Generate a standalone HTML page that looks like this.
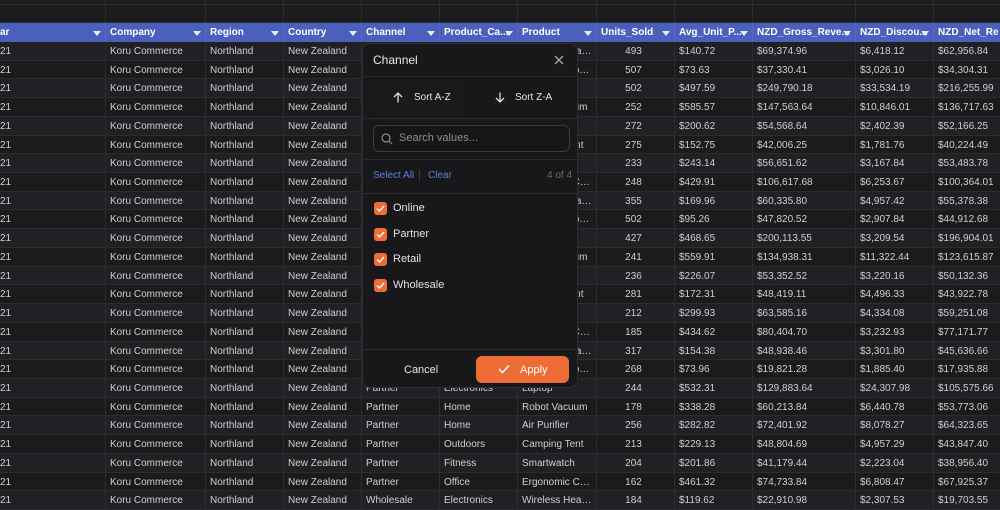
<!DOCTYPE html>
<html><head><meta charset="utf-8"><style>
*{box-sizing:border-box;margin:0;padding:0}
body{width:1000px;height:500px;overflow:hidden;background:#1c1c1e;font-family:"Liberation Sans",sans-serif;font-size:10px;color:#cfcfd2;position:relative}
.g{position:absolute;left:0;top:0;width:1000px}
.r{display:flex;height:18.72px;border-bottom:1px solid #2d2d31}
.r:nth-child(odd){background:#212125}
.r:nth-child(even){background:#1b1b1c}
.r>div{border-right:1px solid #2d2d31;padding-left:4px;padding-right:4px;line-height:19px;white-space:nowrap;overflow:hidden;text-overflow:ellipsis;flex:none}
.r>div.n{text-align:center;padding-left:0}
.w0{width:106px}.w1{width:100px}.w2{width:78px}.w3{width:78px}.w4{width:78px}.w5{width:78px}.w6{width:79px}.w7{width:78px}.w8{width:78px}.w9{width:103px}.w10{width:78px}.w11{width:80px}
.top{position:absolute;left:0;width:1000px;height:18px;background:#1c1c1e;border-bottom:1px solid #2d2d31;display:flex}
.top div{border-right:1px solid #2d2d31;flex:none;height:100%}
.h{position:absolute;left:0;top:23px;width:1000px;height:19px;background:#4b5fbd;display:flex;color:#fff;font-weight:bold;font-size:10px}
.h div{flex:none;padding-left:4px;line-height:19px;position:relative;white-space:nowrap;overflow:hidden;border-right:1px solid #5668c4}
.h div:after{content:"";position:absolute;right:4px;top:8px;border-left:4px solid transparent;border-right:4px solid transparent;border-top:5px solid #e8ebf7}
.pop{position:absolute;left:362px;top:43px;width:216px;height:345px;background:#18181a;border:1px solid #2e2e32;border-radius:8px;color:#e6e6e8}
.hr{position:absolute;left:0;right:0;height:1px;background:#2c2c30}
.cb{position:absolute;left:11px;width:13px;height:13px;border-radius:3px;background:#ee6c35}
.cb svg{position:absolute;left:2px;top:2px}
.lbl{position:absolute;left:30px;font-size:11px;color:#e2e2e4}
</style></head><body>
<div class="top" style="top:-13px"><div class="w0"></div><div class="w1"></div><div class="w2"></div><div class="w3"></div><div class="w4"></div><div class="w5"></div><div class="w6"></div><div class="w7"></div><div class="w8"></div><div class="w9"></div><div class="w10"></div><div class="w11"></div></div>
<div class="top" style="top:5px"><div class="w0"></div><div class="w1"></div><div class="w2"></div><div class="w3"></div><div class="w4"></div><div class="w5"></div><div class="w6"></div><div class="w7"></div><div class="w8"></div><div class="w9"></div><div class="w10"></div><div class="w11"></div></div>
<div class="h"><div class="w0" style="padding-left:0">ar</div><div class="w1">Company</div><div class="w2">Region</div><div class="w3">Country</div><div class="w4">Channel</div><div class="w5">Product_Ca...</div><div class="w6">Product</div><div class="w7">Units_Sold</div><div class="w8">Avg_Unit_P...</div><div class="w9">NZD_Gross_Reve...</div><div class="w10">NZD_Discou...</div><div class="w11">NZD_Net_Re</div></div>
<div class="g" style="top:42px">
<div class="r"><div class="w0" style="padding-left:0">21</div><div class="w1">Koru Commerce</div><div class="w2">Northland</div><div class="w3">New Zealand</div><div class="w4">Online</div><div class="w5">Electronics</div><div class="w6">Wireless Headphones</div><div class="w7 n">493</div><div class="w8">$140.72</div><div class="w9">$69,374.96</div><div class="w10">$6,418.12</div><div class="w11">$62,956.84</div></div>
<div class="r"><div class="w0" style="padding-left:0">21</div><div class="w1">Koru Commerce</div><div class="w2">Northland</div><div class="w3">New Zealand</div><div class="w4">Online</div><div class="w5">Electronics</div><div class="w6">Bluetooth Speaker</div><div class="w7 n">507</div><div class="w8">$73.63</div><div class="w9">$37,330.41</div><div class="w10">$3,026.10</div><div class="w11">$34,304.31</div></div>
<div class="r"><div class="w0" style="padding-left:0">21</div><div class="w1">Koru Commerce</div><div class="w2">Northland</div><div class="w3">New Zealand</div><div class="w4">Online</div><div class="w5">Electronics</div><div class="w6">Laptop</div><div class="w7 n">502</div><div class="w8">$497.59</div><div class="w9">$249,790.18</div><div class="w10">$33,534.19</div><div class="w11">$216,255.99</div></div>
<div class="r"><div class="w0" style="padding-left:0">21</div><div class="w1">Koru Commerce</div><div class="w2">Northland</div><div class="w3">New Zealand</div><div class="w4">Online</div><div class="w5">Home</div><div class="w6">Robot Vacuum</div><div class="w7 n">252</div><div class="w8">$585.57</div><div class="w9">$147,563.64</div><div class="w10">$10,846.01</div><div class="w11">$136,717.63</div></div>
<div class="r"><div class="w0" style="padding-left:0">21</div><div class="w1">Koru Commerce</div><div class="w2">Northland</div><div class="w3">New Zealand</div><div class="w4">Online</div><div class="w5">Home</div><div class="w6">Air Purifier</div><div class="w7 n">272</div><div class="w8">$200.62</div><div class="w9">$54,568.64</div><div class="w10">$2,402.39</div><div class="w11">$52,166.25</div></div>
<div class="r"><div class="w0" style="padding-left:0">21</div><div class="w1">Koru Commerce</div><div class="w2">Northland</div><div class="w3">New Zealand</div><div class="w4">Online</div><div class="w5">Outdoors</div><div class="w6">Camping Tent</div><div class="w7 n">275</div><div class="w8">$152.75</div><div class="w9">$42,006.25</div><div class="w10">$1,781.76</div><div class="w11">$40,224.49</div></div>
<div class="r"><div class="w0" style="padding-left:0">21</div><div class="w1">Koru Commerce</div><div class="w2">Northland</div><div class="w3">New Zealand</div><div class="w4">Online</div><div class="w5">Fitness</div><div class="w6">Smartwatch</div><div class="w7 n">233</div><div class="w8">$243.14</div><div class="w9">$56,651.62</div><div class="w10">$3,167.84</div><div class="w11">$53,483.78</div></div>
<div class="r"><div class="w0" style="padding-left:0">21</div><div class="w1">Koru Commerce</div><div class="w2">Northland</div><div class="w3">New Zealand</div><div class="w4">Online</div><div class="w5">Office</div><div class="w6">Ergonomic Chair Pro</div><div class="w7 n">248</div><div class="w8">$429.91</div><div class="w9">$106,617.68</div><div class="w10">$6,253.67</div><div class="w11">$100,364.01</div></div>
<div class="r"><div class="w0" style="padding-left:0">21</div><div class="w1">Koru Commerce</div><div class="w2">Northland</div><div class="w3">New Zealand</div><div class="w4">Retail</div><div class="w5">Electronics</div><div class="w6">Wireless Headphones</div><div class="w7 n">355</div><div class="w8">$169.96</div><div class="w9">$60,335.80</div><div class="w10">$4,957.42</div><div class="w11">$55,378.38</div></div>
<div class="r"><div class="w0" style="padding-left:0">21</div><div class="w1">Koru Commerce</div><div class="w2">Northland</div><div class="w3">New Zealand</div><div class="w4">Retail</div><div class="w5">Electronics</div><div class="w6">Bluetooth Speaker</div><div class="w7 n">502</div><div class="w8">$95.26</div><div class="w9">$47,820.52</div><div class="w10">$2,907.84</div><div class="w11">$44,912.68</div></div>
<div class="r"><div class="w0" style="padding-left:0">21</div><div class="w1">Koru Commerce</div><div class="w2">Northland</div><div class="w3">New Zealand</div><div class="w4">Retail</div><div class="w5">Electronics</div><div class="w6">Laptop</div><div class="w7 n">427</div><div class="w8">$468.65</div><div class="w9">$200,113.55</div><div class="w10">$3,209.54</div><div class="w11">$196,904.01</div></div>
<div class="r"><div class="w0" style="padding-left:0">21</div><div class="w1">Koru Commerce</div><div class="w2">Northland</div><div class="w3">New Zealand</div><div class="w4">Retail</div><div class="w5">Home</div><div class="w6">Robot Vacuum</div><div class="w7 n">241</div><div class="w8">$559.91</div><div class="w9">$134,938.31</div><div class="w10">$11,322.44</div><div class="w11">$123,615.87</div></div>
<div class="r"><div class="w0" style="padding-left:0">21</div><div class="w1">Koru Commerce</div><div class="w2">Northland</div><div class="w3">New Zealand</div><div class="w4">Retail</div><div class="w5">Home</div><div class="w6">Air Purifier</div><div class="w7 n">236</div><div class="w8">$226.07</div><div class="w9">$53,352.52</div><div class="w10">$3,220.16</div><div class="w11">$50,132.36</div></div>
<div class="r"><div class="w0" style="padding-left:0">21</div><div class="w1">Koru Commerce</div><div class="w2">Northland</div><div class="w3">New Zealand</div><div class="w4">Retail</div><div class="w5">Outdoors</div><div class="w6">Camping Tent</div><div class="w7 n">281</div><div class="w8">$172.31</div><div class="w9">$48,419.11</div><div class="w10">$4,496.33</div><div class="w11">$43,922.78</div></div>
<div class="r"><div class="w0" style="padding-left:0">21</div><div class="w1">Koru Commerce</div><div class="w2">Northland</div><div class="w3">New Zealand</div><div class="w4">Retail</div><div class="w5">Fitness</div><div class="w6">Smartwatch</div><div class="w7 n">212</div><div class="w8">$299.93</div><div class="w9">$63,585.16</div><div class="w10">$4,334.08</div><div class="w11">$59,251.08</div></div>
<div class="r"><div class="w0" style="padding-left:0">21</div><div class="w1">Koru Commerce</div><div class="w2">Northland</div><div class="w3">New Zealand</div><div class="w4">Retail</div><div class="w5">Office</div><div class="w6">Ergonomic Chair Pro</div><div class="w7 n">185</div><div class="w8">$434.62</div><div class="w9">$80,404.70</div><div class="w10">$3,232.93</div><div class="w11">$77,171.77</div></div>
<div class="r"><div class="w0" style="padding-left:0">21</div><div class="w1">Koru Commerce</div><div class="w2">Northland</div><div class="w3">New Zealand</div><div class="w4">Partner</div><div class="w5">Electronics</div><div class="w6">Wireless Headphones</div><div class="w7 n">317</div><div class="w8">$154.38</div><div class="w9">$48,938.46</div><div class="w10">$3,301.80</div><div class="w11">$45,636.66</div></div>
<div class="r"><div class="w0" style="padding-left:0">21</div><div class="w1">Koru Commerce</div><div class="w2">Northland</div><div class="w3">New Zealand</div><div class="w4">Partner</div><div class="w5">Electronics</div><div class="w6">Bluetooth Speaker</div><div class="w7 n">268</div><div class="w8">$73.96</div><div class="w9">$19,821.28</div><div class="w10">$1,885.40</div><div class="w11">$17,935.88</div></div>
<div class="r"><div class="w0" style="padding-left:0">21</div><div class="w1">Koru Commerce</div><div class="w2">Northland</div><div class="w3">New Zealand</div><div class="w4">Partner</div><div class="w5">Electronics</div><div class="w6">Laptop</div><div class="w7 n">244</div><div class="w8">$532.31</div><div class="w9">$129,883.64</div><div class="w10">$24,307.98</div><div class="w11">$105,575.66</div></div>
<div class="r"><div class="w0" style="padding-left:0">21</div><div class="w1">Koru Commerce</div><div class="w2">Northland</div><div class="w3">New Zealand</div><div class="w4">Partner</div><div class="w5">Home</div><div class="w6">Robot Vacuum</div><div class="w7 n">178</div><div class="w8">$338.28</div><div class="w9">$60,213.84</div><div class="w10">$6,440.78</div><div class="w11">$53,773.06</div></div>
<div class="r"><div class="w0" style="padding-left:0">21</div><div class="w1">Koru Commerce</div><div class="w2">Northland</div><div class="w3">New Zealand</div><div class="w4">Partner</div><div class="w5">Home</div><div class="w6">Air Purifier</div><div class="w7 n">256</div><div class="w8">$282.82</div><div class="w9">$72,401.92</div><div class="w10">$8,078.27</div><div class="w11">$64,323.65</div></div>
<div class="r"><div class="w0" style="padding-left:0">21</div><div class="w1">Koru Commerce</div><div class="w2">Northland</div><div class="w3">New Zealand</div><div class="w4">Partner</div><div class="w5">Outdoors</div><div class="w6">Camping Tent</div><div class="w7 n">213</div><div class="w8">$229.13</div><div class="w9">$48,804.69</div><div class="w10">$4,957.29</div><div class="w11">$43,847.40</div></div>
<div class="r"><div class="w0" style="padding-left:0">21</div><div class="w1">Koru Commerce</div><div class="w2">Northland</div><div class="w3">New Zealand</div><div class="w4">Partner</div><div class="w5">Fitness</div><div class="w6">Smartwatch</div><div class="w7 n">204</div><div class="w8">$201.86</div><div class="w9">$41,179.44</div><div class="w10">$2,223.04</div><div class="w11">$38,956.40</div></div>
<div class="r"><div class="w0" style="padding-left:0">21</div><div class="w1">Koru Commerce</div><div class="w2">Northland</div><div class="w3">New Zealand</div><div class="w4">Partner</div><div class="w5">Office</div><div class="w6">Ergonomic Chair Pro</div><div class="w7 n">162</div><div class="w8">$461.32</div><div class="w9">$74,733.84</div><div class="w10">$6,808.47</div><div class="w11">$67,925.37</div></div>
<div class="r"><div class="w0" style="padding-left:0">21</div><div class="w1">Koru Commerce</div><div class="w2">Northland</div><div class="w3">New Zealand</div><div class="w4">Wholesale</div><div class="w5">Electronics</div><div class="w6">Wireless Headphones</div><div class="w7 n">184</div><div class="w8">$119.62</div><div class="w9">$22,910.98</div><div class="w10">$2,307.53</div><div class="w11">$19,703.55</div></div>
</div>

<div class="pop">
<div style="position:absolute;left:10px;top:9px;font-size:12px;color:#e8e8ea">Channel</div>
<svg style="position:absolute;left:191px;top:11px" width="10" height="10" viewBox="0 0 10 10"><path d="M1 1L9 9M9 1L1 9" stroke="#a8a8ac" stroke-width="1.3"/></svg>
<div class="hr" style="top:32px"></div>
<div style="position:absolute;left:10px;top:36px;width:92px;height:34px;border-radius:6px;background:#1a1a1c"></div>
<svg style="position:absolute;left:30px;top:48px" width="10" height="11" viewBox="0 0 10 11"><path d="M5 10.5V1M1 5L5 1L9 5" stroke="#e0e0e2" stroke-width="1.3" fill="none"/></svg>
<div style="position:absolute;left:51px;top:48px;font-size:10px;color:#e6e6e8">Sort A-Z</div>
<svg style="position:absolute;left:132px;top:48px" width="10" height="11" viewBox="0 0 10 11"><path d="M5 0.5V10M1 6L5 10L9 6" stroke="#e0e0e2" stroke-width="1.3" fill="none"/></svg>
<div style="position:absolute;left:152px;top:48px;font-size:10px;color:#e6e6e8">Sort Z-A</div>
<div class="hr" style="top:74px"></div>
<div style="position:absolute;left:10px;top:81px;width:197px;height:27px;border:1px solid #3a3a3f;border-radius:6px;background:#161618"></div>
<svg style="position:absolute;left:18px;top:89px" width="12" height="12" viewBox="0 0 12 12"><circle cx="5" cy="5" r="4" stroke="#8c8c90" stroke-width="1.2" fill="none"/><path d="M8 8L11 11" stroke="#8c8c90" stroke-width="1.2"/></svg>
<div style="position:absolute;left:36px;top:88px;font-size:11px;color:#8e8e92">Search values...</div>
<div class="hr" style="top:115px"></div>
<div style="position:absolute;left:10px;top:126px;font-size:10px;color:#5b7fe0">Select All</div>
<div style="position:absolute;left:56px;top:126px;width:1px;height:11px;background:#3c3c40"></div>
<div style="position:absolute;left:65px;top:126px;font-size:10px;color:#5b7fe0">Clear</div>
<div style="position:absolute;left:184px;top:126px;font-size:10px;color:#6c6c70">4 of 4</div>
<div class="hr" style="top:149px"></div>
<div class="cb" style="top:158px"><svg width="9" height="9" viewBox="0 0 9 9"><path d="M1 4.5L3.5 7L8 2" stroke="#fff" stroke-width="1.4" fill="none"/></svg></div><div class="lbl" style="top:158px">Online</div>
<div class="cb" style="top:184px"><svg width="9" height="9" viewBox="0 0 9 9"><path d="M1 4.5L3.5 7L8 2" stroke="#fff" stroke-width="1.4" fill="none"/></svg></div><div class="lbl" style="top:184px">Partner</div>
<div class="cb" style="top:209px"><svg width="9" height="9" viewBox="0 0 9 9"><path d="M1 4.5L3.5 7L8 2" stroke="#fff" stroke-width="1.4" fill="none"/></svg></div><div class="lbl" style="top:209px">Retail</div>
<div class="cb" style="top:235px"><svg width="9" height="9" viewBox="0 0 9 9"><path d="M1 4.5L3.5 7L8 2" stroke="#fff" stroke-width="1.4" fill="none"/></svg></div><div class="lbl" style="top:235px">Wholesale</div>
<div class="hr" style="top:305px"></div>
<div style="position:absolute;left:41px;top:320px;font-size:11px;color:#e6e6e8">Cancel</div>
<div style="position:absolute;left:113px;top:312px;width:93px;height:27px;border-radius:6px;background:#ee6c35"></div>
<svg style="position:absolute;left:135px;top:320px" width="12" height="10" viewBox="0 0 12 10"><path d="M1 5L4.5 8.5L11 1.5" stroke="#fff" stroke-width="1.5" fill="none"/></svg>
<div style="position:absolute;left:157px;top:320px;font-size:11px;color:#fff">Apply</div>
</div>
</body></html>
